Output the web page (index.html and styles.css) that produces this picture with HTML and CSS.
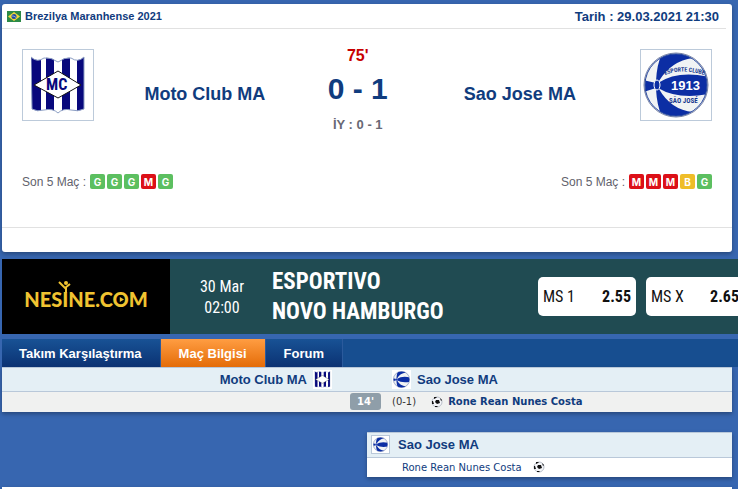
FILE: index.html
```
<!DOCTYPE html>
<html lang="tr">
<head>
<title>Moto Club MA - Sao Jose MA</title>
<meta charset="UTF-8">
<meta name="viewport" content="width=device-width, initial-scale=1.0">
<link rel="stylesheet" href="styles.css">
</head>
<body>

<!-- shared icons -->
<svg class="sprite" aria-hidden="true">
  <symbol id="crest-moto" viewBox="0 0 54 58">
    <clipPath id="shield"><path d="M0 1Q6 7 13 2Q20 1 27 6Q34 1 40 2Q47 7 53 1V53Q47 56 40 54Q32 52 27 57Q22 52 13 54Q6 56 1 53Z"/></clipPath>
    <g clip-path="url(#shield)">
      <path fill="#fff" d="M0 0H54V58H0Z"/>
      <path fill="#08087c" d="M0 0H10V58H0ZM15 0H23V58H15ZM31 0H39V58H31ZM46 0H54V58H46Z"/>
    </g>
    <path fill="none" stroke="#8d9fc4" d="M0 1Q6 7 13 2Q20 1 27 6Q34 1 40 2Q47 7 53 1V53Q47 56 40 54Q32 52 27 57Q22 52 13 54Q6 56 1 53Z"/>
    <path fill="#fff" stroke="#111" d="M3 29L27 15L50 29L27 42Z"/>
  </symbol>
  <symbol id="crest-jose" viewBox="0 0 66 66">
    <clipPath id="ball"><circle cx="33" cy="33" r="31"/></clipPath>
    <circle cx="33" cy="33" r="32" fill="#f1f3f4" stroke="#7883a5"/>
    <g clip-path="url(#ball)">
      <path fill="#0c2ea4" d="M0 28L13 31V36L0 40ZM15 31Q35 18 66 25V42Q35 48 15 36ZM13 29Q14 10 20 0H50V6Q28 9 16 29ZM13 37Q14 56 20 66H50V60Q28 58 16 37Z"/>
    </g>
    <circle cx="33" cy="33" r="31" fill="none" stroke="#26479f"/>
    <ellipse cx="14" cy="33" rx="3" ry="5" fill="#0c2ea4" stroke="#fff"/>
  </symbol>
  <symbol id="goal" viewBox="0 0 12 12">
    <circle cx="6" cy="6" r="5" fill="#f4f5f8" stroke="#b9bfca"/>
    <path fill="#111" d="M5 4L8 4L9 7L6 8L4 6ZM3 1L6 1L5 2L3 3ZM9 2L11 4L10 5ZM1 5L2 5L3 8L1 8ZM4 10L7 10L6 11L4 11Z"/>
  </symbol>
</svg>

<section class="match">
  <header class="match-header">
    <span class="league">
      <svg class="flag" viewBox="0 0 14 11" aria-hidden="true">
        <path fill="#2c8a47" d="M0 0H14V11H0Z"/>
        <path fill="#f3d83a" d="M1 5.500L7 1L13 5.500L7 10Z"/>
        <circle cx="7" cy="5.500" r="2.500" fill="#1f4aa0"/>
        <path stroke="#dfe9f4" stroke-width=".6" fill="none" d="M5 5Q7 4.500 9 6.500"/>
      </svg>
      Brezilya Maranhense 2021
    </span>
    <span class="date">Tarih : 29.03.2021 21:30</span>
  </header>

  <div class="score-board">
    <div class="crest">
      <svg class="crest-moto" viewBox="0 0 54 58">
        <use href="#crest-moto"/>
        <text x="15" y="34">MC</text>
      </svg>
    </div>
    <a class="team" href="#moto">Moto Club MA</a>
    <div class="score">
      <div class="minute">75'</div>
      <div class="result">0 - 1</div>
      <div class="half">İY : 0 - 1</div>
    </div>
    <a class="team" href="#jose">Sao Jose MA</a>
    <div class="crest">
      <svg class="crest-jose" viewBox="0 0 66 66">
        <use href="#crest-jose"/>
        <path id="arc" fill="none" d="M22 23Q39 16 61 23"/>
        <text class="crest-arc"><textPath href="#arc">ESPORTE CLUBE</textPath></text>
        <text class="crest-year" x="28" y="38">1913</text>
        <text class="crest-name" x="26" y="51">SÃO JOSÉ</text>
      </svg>
    </div>
  </div>

  <div class="last-matches">
    <div class="form">Son 5 Maç :
      <span class="win">G</span><span class="win">G</span><span class="win">G</span><span class="loss">M</span><span class="win">G</span>
    </div>
    <div class="form">Son 5 Maç :
      <span class="loss">M</span><span class="loss">M</span><span class="loss">M</span><span class="draw">B</span><span class="win">G</span>
    </div>
  </div>
  <div class="match-footer"></div>
</section>

<aside class="banner">
  <a class="sponsor" href="#nesine">
    <span class="sponsor-name">NESINE.COM
      <svg class="sponsor-figure" viewBox="0 0 14 12" aria-hidden="true">
        <circle cx="8" cy="2" r="2" fill="#f0c331"/>
        <path fill="none" stroke="#f0c331" stroke-width="2" d="M1 1L7 7L12 3M8 6V12"/>
      </svg>
      <svg class="sponsor-play" viewBox="0 0 6 6" aria-hidden="true"><path fill="#f0c331" d="M1 0L6 3L1 6Z"/></svg>
    </span>
  </a>
  <div class="banner-date">30 Mar<br>02:00</div>
  <div class="banner-teams">ESPORTIVO<br>NOVO HAMBURGO</div>
  <button class="odd" type="button"><span>MS 1</span><b>2.55</b></button>
  <button class="odd" type="button"><span>MS X</span><b>2.65</b></button>
</aside>

<nav class="tabs">
  <a href="#karsilastirma">Takım Karşılaştırma</a>
  <a class="active" href="#bilgi">Maç Bilgisi</a>
  <a href="#forum">Forum</a>
</nav>

<table class="events">
  <thead>
    <tr>
      <th class="home"><span class="side">Moto Club MA <svg class="mini"><use href="#crest-moto"/></svg></span></th>
      <th class="middle"></th>
      <th class="away"><span class="side"><svg class="mini"><use href="#crest-jose"/></svg> Sao Jose MA</span></th>
    </tr>
  </thead>
  <tbody>
    <tr>
      <td></td>
      <td class="middle"><span class="time">14'</span></td>
      <td><span class="event">(0-1) <svg class="goal"><use href="#goal"/></svg> <a href="#costa">Rone Rean Nunes Costa</a></span></td>
    </tr>
  </tbody>
</table>

<section class="scorers">
  <h3><svg class="mini framed"><use href="#crest-jose"/></svg> Sao Jose MA</h3>
  <p><a href="#costa">Rone Rean Nunes Costa</a> <svg class="goal"><use href="#goal"/></svg></p>
</section>

<section class="next-box"></section>

</body>
</html>
```

FILE: styles.css
```
* {
  box-sizing: border-box;
}

body {
  margin: 0;
  padding: 4px 6px 0 2px;
  background: #3766b0;
  font-family: "Liberation Sans", Arial, sans-serif;
  color: #103c7e;
  overflow: hidden;
}

a {
  color: inherit;
  text-decoration: none;
}

svg {
  display: block;
}

.sprite {
  position: absolute;
  width: 0;
  height: 0;
}

/* match card */
.match {
  background: #fff;
  border-radius: 3px;
  box-shadow: 0 2px 4px rgba(0, 0, 0, 0.3);
}

.match-header {
  display: flex;
  justify-content: space-between;
  align-items: center;
  height: 25px;
  margin-right: 6px;
  padding: 0 7px 0 5px;
  border-bottom: 1px solid #e1e1e1;
  font-weight: bold;
}

.league {
  display: flex;
  align-items: center;
  gap: 4px;
  font-size: 11px;
}

.flag {
  width: 14px;
  height: 11px;
}

.date {
  font-size: 13px;
}

.score-board {
  display: grid;
  grid-template-columns: 72px 12fr 84px 13fr 72px;
  padding: 20px 20px 0;
  text-align: center;
}

.crest {
  display: flex;
  align-items: center;
  justify-content: center;
  height: 72px;
  border: 1px solid #bccada;
}

.crest-moto {
  width: 54px;
  height: 58px;
  font: bold 16px "Roboto Condensed", "Liberation Sans", sans-serif;
  fill: #08087c;
}

.crest-jose {
  width: 66px;
  height: 66px;
  font-family: "Roboto Condensed", "Liberation Sans", sans-serif;
  font-weight: bold;
  fill: #18398f;
}

.crest-arc {
  font-size: 6px;
}

.crest-year {
  font: bold 13px "Liberation Sans", Arial, sans-serif;
  fill: #fff;
}

.crest-name {
  font-size: 7px;
}

.team {
  padding-top: 35px;
  font-size: 18px;
  line-height: 20px;
  font-weight: bold;
}

.score {
  font-weight: bold;
}

.minute {
  padding-top: 1px;
  height: 18px;
  font-size: 16px;
  line-height: 12px;
  color: #c80000;
}

.result {
  font-size: 30px;
  line-height: 44px;
}

.half {
  font-size: 13px;
  line-height: 28px;
  color: #686874;
}

.last-matches {
  display: flex;
  justify-content: space-between;
  padding: 35px 20px 38px;
}

.form {
  display: flex;
  align-items: center;
  gap: 2px;
  height: 15px;
  font-size: 12px;
  color: #62626c;
}

.form span {
  width: 15px;
  height: 15px;
  border-radius: 2px;
  font: bold 10px/16px Inter, sans-serif;
  text-align: center;
  color: #fff;
}

.form span:first-of-type {
  margin-left: 2px;
}

.form .win {
  background: #5cbf60;
}

.form .loss {
  background: #dc1018;
}

.form .draw {
  background: #efbd28;
}

.match-footer {
  height: 25px;
  border-top: 1px solid #e1e1e1;
}

/* betting banner */
.banner {
  display: flex;
  align-items: center;
  height: 75px;
  margin: 7px -6px 0 0;
  background: #204b52;
  color: #fff;
  overflow: hidden;
}

.sponsor {
  display: flex;
  flex: none;
  align-items: center;
  justify-content: center;
  width: 168px;
  height: 100%;
  background: #000;
}

.sponsor-name {
  position: relative;
  padding-top: 4px;
  font: 900 20px/24px Lato, sans-serif;
  color: #f0c331;
}

.sponsor-figure {
  position: absolute;
  left: 34px;
  top: -2px;
  width: 14px;
  height: 12px;
}

.sponsor-play {
  position: absolute;
  right: 24px;
  top: 14px;
  width: 5px;
  height: 5px;
}

.banner-date {
  flex: none;
  width: 102px;
  padding-left: 2px;
  font: 16px/21px "Roboto Condensed", "Liberation Sans Narrow", "Liberation Sans", sans-serif;
  text-align: center;
}

.banner-teams {
  flex: none;
  width: 266px;
  font: bold 23px/30px "Roboto Condensed", "Liberation Sans Narrow", "Liberation Sans", sans-serif;
}

.odd {
  display: flex;
  flex: none;
  justify-content: space-between;
  align-items: center;
  width: 98px;
  height: 39px;
  margin-right: 10px;
  padding: 0 5px;
  border: 0;
  border-radius: 5px;
  background: #fff;
  color: #111;
  font: 16px "Roboto Condensed", "Liberation Sans Narrow", "Liberation Sans", sans-serif;
}

/* tabs */
.tabs {
  display: flex;
  height: 28px;
  margin: 5px -6px 0 0;
  background: #174e90;
}

.tabs a {
  padding: 0 18px;
  border-right: 1px solid #2b5a9c;
  background: linear-gradient(#185295, #0b3273);
  font-size: 13px;
  line-height: 29px;
  font-weight: bold;
  color: #fff;
}

.tabs a:first-child {
  padding-left: 17px;
}

.tabs .active {
  background: linear-gradient(#ff9d42, #e46c08);
}

/* events */
.events {
  width: 100%;
  table-layout: fixed;
  border-collapse: collapse;
  background: #f0f1f0;
  box-shadow: 0 2px 4px rgba(0, 0, 0, 0.3);
}

.events th,
.events td {
  padding: 0;
}

.events th {
  height: 24px;
  border-top: 1px solid #b9c8d9;
  border-bottom: 1px solid #b9c8d9;
  background: #e4eff5;
  font-size: 13px;
}

.events .middle {
  width: 50px;
  text-align: center;
}

.events td {
  height: 20px;
  font: 10px "DejaVu Sans", Verdana, sans-serif;
}

.side {
  display: flex;
  align-items: center;
  gap: 6px;
}

.home .side {
  justify-content: flex-end;
  padding-right: 10px;
}

.mini {
  flex: none;
  width: 19px;
  height: 19px;
  padding: 1px;
  background: #fff;
}

.framed {
  border: 1px solid #b9c8d9;
}

.time {
  display: block;
  width: 31px;
  margin-left: 8px;
  border-radius: 3px;
  background: #8f9ea9;
  line-height: 17px;
  font-weight: bold;
  color: #fff;
}

.event {
  display: flex;
  align-items: center;
  color: #333;
}

.event .goal {
  margin: 0 5px 0 15px;
}

.event a {
  font-weight: bold;
  color: #103c7e;
}

.goal {
  width: 12px;
  height: 12px;
}

/* scorers */
.scorers,
.next-box {
  width: 50%;
  margin: 20px 0 0 auto;
  background: #fff;
  box-shadow: 0 2px 4px rgba(0, 0, 0, 0.3);
}

.scorers h3 {
  display: flex;
  align-items: center;
  gap: 8px;
  height: 26px;
  margin: 0;
  padding: 0 4px;
  border-top: 1px solid #b9c8d9;
  border-bottom: 1px solid #b9c8d9;
  background: #e4eff5;
  font-size: 13px;
}

.scorers p {
  display: flex;
  align-items: center;
  gap: 11px;
  height: 19px;
  margin: 0;
  padding-left: 35px;
  font: 10px "DejaVu Sans", Verdana, sans-serif;
}

.next-box {
  width: 100%;
  height: 20px;
  margin-top: 10px;
}
```
